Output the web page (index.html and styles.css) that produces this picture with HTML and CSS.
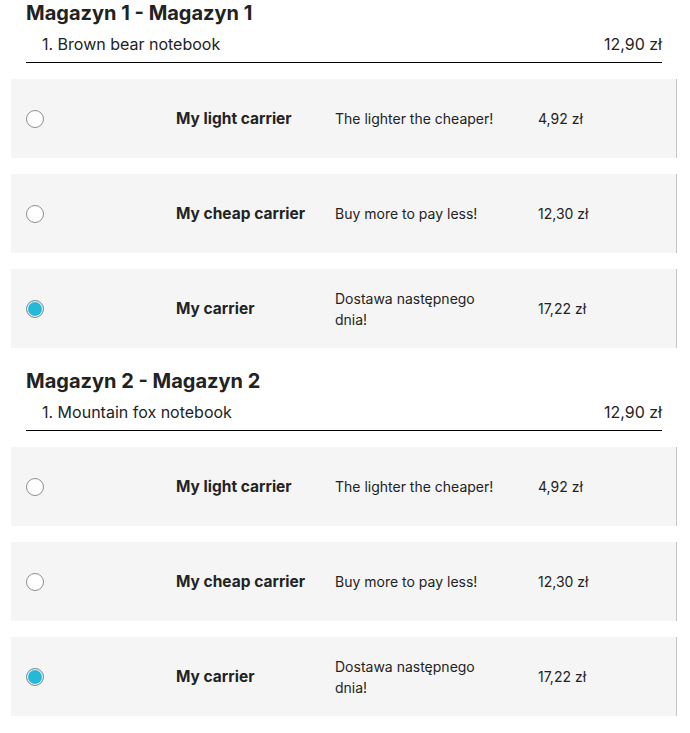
FILE: index.html
```html
<!DOCTYPE html>
<html lang="pl">

<head>
    <meta charset="UTF-8">
    <meta name="viewport" content="width=device-width, initial-scale=1.0">
    <title>Dostawa</title>
    <link rel="stylesheet" href="styles.css">
</head>

<body>
    <section class="shipment">
        <h2 class="warehouse">Magazyn 1 - Magazyn 1</h2>
        <div class="product">
            <span>1. Brown bear notebook</span>
            <span>12,90 zł</span>
        </div>
        <label class="carrier">
            <span class="radio"></span>
            <span class="name">My light carrier</span>
            <span class="delay">The lighter the cheaper!</span>
            <span class="price">4,92 zł</span>
        </label>
        <label class="carrier">
            <span class="radio"></span>
            <span class="name">My cheap carrier</span>
            <span class="delay">Buy more to pay less!</span>
            <span class="price">12,30 zł</span>
        </label>
        <label class="carrier">
            <span class="radio checked"></span>
            <span class="name">My carrier</span>
            <span class="delay">Dostawa następnego dnia!</span>
            <span class="price">17,22 zł</span>
        </label>
    </section>

    <section class="shipment">
        <h2 class="warehouse">Magazyn 2 - Magazyn 2</h2>
        <div class="product">
            <span>1. Mountain fox notebook</span>
            <span>12,90 zł</span>
        </div>
        <label class="carrier">
            <span class="radio"></span>
            <span class="name">My light carrier</span>
            <span class="delay">The lighter the cheaper!</span>
            <span class="price">4,92 zł</span>
        </label>
        <label class="carrier">
            <span class="radio"></span>
            <span class="name">My cheap carrier</span>
            <span class="delay">Buy more to pay less!</span>
            <span class="price">12,30 zł</span>
        </label>
        <label class="carrier">
            <span class="radio checked"></span>
            <span class="name">My carrier</span>
            <span class="delay">Dostawa następnego dnia!</span>
            <span class="price">17,22 zł</span>
        </label>
    </section>
</body>

</html>
```

FILE: styles.css
```css
body {
    margin: 0;
    padding: 0;
    font-family: Inter, "Noto Sans", sans-serif;
    color: #232323;
    background: #fff;
}

.shipment {
    padding-bottom: 20px;
}

.warehouse {
    margin: 0 0 0 26px;
    font-size: 20px;
    line-height: 26px;
    font-weight: 700;
    color: #222;
}

.product {
    display: flex;
    justify-content: space-between;
    margin: 0 28px 0 26px;
    padding: 6px 0 6px 16px;
    border-bottom: 1px solid #000;
    font-size: 16px;
    line-height: 24px;
}

.carrier {
    display: flex;
    align-items: center;
    height: 79px;
    margin: 16px 13px 0 11px;
    padding-left: 15px;
    background: #f5f5f5;
    border-right: 1px solid #c4c4c4;
    box-sizing: border-box;
    font-size: 14px;
    line-height: 21px;
    cursor: pointer;
}

.radio {
    flex: none;
    width: 18px;
    height: 18px;
    margin-right: 132px;
    border: 1px solid #8f8f8f;
    border-radius: 50%;
    background: #fff;
    box-sizing: border-box;
}

.radio.checked {
    background: #25b9d7;
    box-shadow: inset 0 0 0 1px #fff;
}

.name {
    flex: none;
    width: 159px;
    font-size: 15.5px;
    font-weight: 700;
}

.delay {
    flex: none;
    width: 175px;
    margin-right: 28px;
}
```
